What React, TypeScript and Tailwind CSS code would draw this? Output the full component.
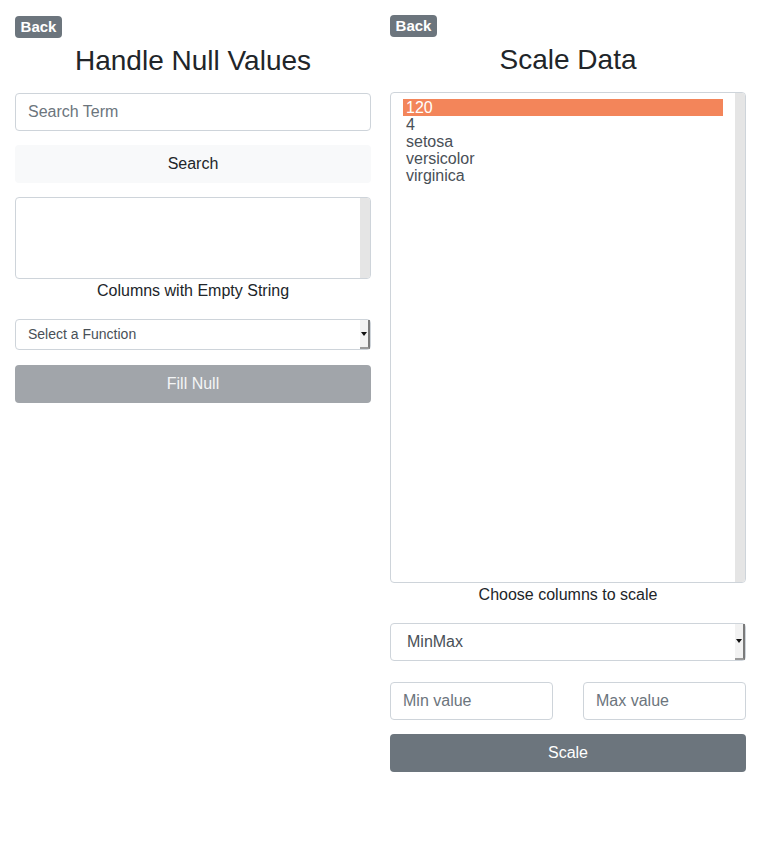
const FONT = { fontFamily: '"Liberation Sans", Arial, sans-serif' };

function BackBadge(): React.ReactElement {
  return (
    <span className="inline-block w-[47px] rounded-[4px] bg-[#6c757d] text-center text-[15px] font-bold leading-[22px] text-white">
      Back
    </span>
  );
}

function SelectArrow(): React.ReactElement {
  return (
    <div className="flex w-[10px] items-center justify-center self-stretch border-r-2 border-b-2 border-r-[#7a7a7a] border-b-[#9a9a9a] bg-[#f2f2f2]">
      <svg width="6" height="4" viewBox="0 0 6 4">
        <polygon points="0,0 6,0 3,4" fill="#111" />
      </svg>
    </div>
  );
}

function ListBox({ items, height, selected }: { items: string[]; height: string; selected?: number }): React.ReactElement {
  return (
    <div className={`flex ${height} overflow-hidden rounded-[4px] border border-[#ced4da] bg-white`}>
      <div className="flex-1 px-3 pt-[6px]">
        {items.map((item, i) => (
          <div
            key={item}
            className={`text-[16px] leading-[17px] ${i === selected ? 'bg-[#f3855a] text-white' : 'text-[#495057]'} pl-[3px]`}
          >
            {item}
          </div>
        ))}
      </div>
      <div className="w-[10px] bg-[#e5e5e5]" />
    </div>
  );
}

function NullPanel(): React.ReactElement {
  return (
    <div className="flex flex-col">
      <div className="mt-[15px]">
        <BackBadge />
      </div>
      <h3 className="mt-[5px] text-center text-[28px] leading-[34px] text-[#212529]">Handle Null Values</h3>
      <input
        placeholder="Search Term"
        className="mt-[15px] h-[38px] rounded-[4px] border border-[#ced4da] bg-white px-3 text-[16px] text-[#495057] placeholder:text-[#6c757d] outline-none"
      />
      <button className="mt-[14px] h-[38px] rounded-[4px] bg-[#f8f9fa] text-[16px] text-[#212529]">Search</button>
      <div className="mt-[14px]">
        <ListBox items={[]} height="h-[82px]" />
      </div>
      <p className="text-center text-[16px] leading-[24px] text-[#212529]">Columns with Empty String</p>
      <div className="mt-[16px] flex h-[31px] items-center rounded-[4px] border border-[#ced4da] bg-white">
        <span className="flex-1 pl-3 text-[14px] text-[#495057]">Select a Function</span>
        <SelectArrow />
      </div>
      <button className="mt-[15px] h-[38px] rounded-[4px] bg-[#a1a5aa] text-[16px] text-[#f4f5f6]">Fill Null</button>
    </div>
  );
}

function ScalePanel(): React.ReactElement {
  return (
    <div className="flex flex-col">
      <div className="mt-[14px]">
        <BackBadge />
      </div>
      <h3 className="mt-[5px] text-center text-[28px] leading-[34px] text-[#212529]">Scale Data</h3>
      <div className="mt-[15px]">
        <ListBox items={['120', '4', 'setosa', 'versicolor', 'virginica']} height="h-[491px]" selected={0} />
      </div>
      <p className="text-center text-[16px] leading-[24px] text-[#212529]">Choose columns to scale</p>
      <div className="mt-[16px] flex h-[38px] items-center rounded-[4px] border border-[#ced4da] bg-white">
        <span className="flex-1 pl-4 text-[16px] text-[#495057]">MinMax</span>
        <SelectArrow />
      </div>
      <div className="mt-[21px] flex justify-between">
        <input
          placeholder="Min value"
          className="h-[38px] w-[163px] rounded-[4px] border border-[#ced4da] bg-white px-3 text-[16px] placeholder:text-[#6c757d] outline-none"
        />
        <input
          placeholder="Max value"
          className="h-[38px] w-[163px] rounded-[4px] border border-[#ced4da] bg-white px-3 text-[16px] placeholder:text-[#6c757d] outline-none"
        />
      </div>
      <button className="mt-[14px] h-[38px] rounded-[4px] bg-[#6c757d] text-[16px] text-white">Scale</button>
    </div>
  );
}

export default function App(): React.ReactElement {
  return (
    <div className="min-h-[852px] bg-white pl-[15px] pr-[14px]" style={FONT}>
      <div className="grid grid-cols-[356px_356px] gap-x-[19px]">
        <NullPanel />
        <ScalePanel />
      </div>
    </div>
  );
}
